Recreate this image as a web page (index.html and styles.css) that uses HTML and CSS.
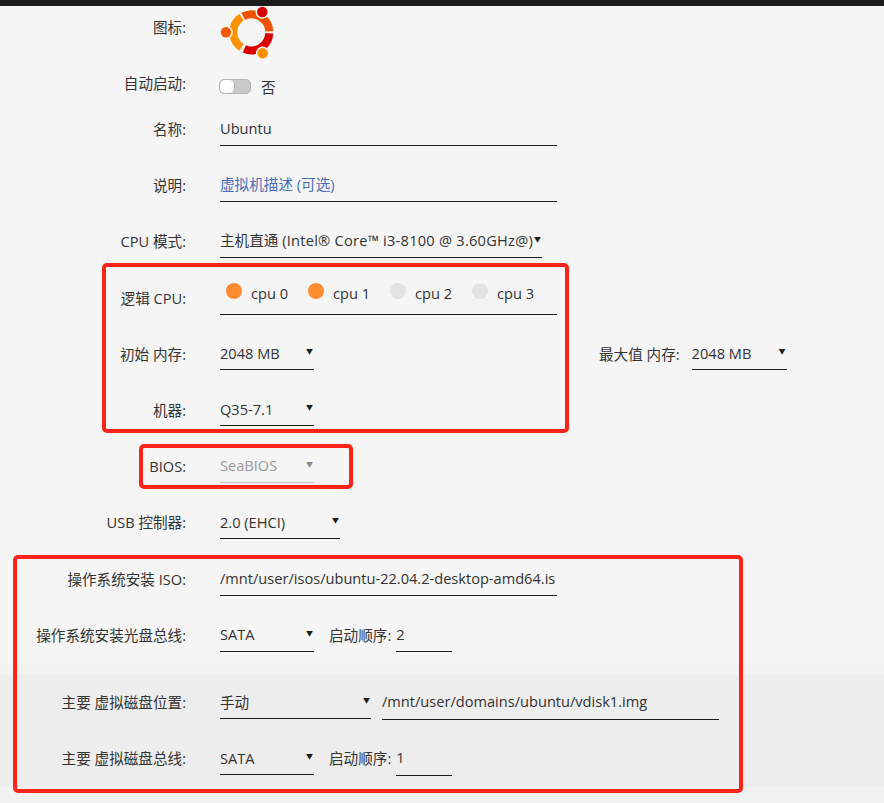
FILE: index.html
```html
<!DOCTYPE html>
<html lang="zh">
<head>
<meta charset="utf-8">
<title>VM</title>
<link rel="stylesheet" href="styles.css">
</head>
<body>
<div class="topbar"></div>
<main class="form">
  <div class="row row-icon">
    <div class="label">图标:</div>
    <svg class="logo" viewBox="0 0 54 54" width="54" height="54">
      <g fill="none" stroke-width="8">
        <path d="M23.1 10.3 A18 18 0 0 1 49.3 25.4" stroke="#f15200"/>
        <path d="M49.3 27.2 A18 18 0 0 1 24.3 42.9" stroke="#dc0000"/>
        <path d="M21.5 41.4 A18 18 0 0 1 21.5 11.2" stroke="#ff9000"/>
      </g>
      <g stroke="#f5f5f5" stroke-width="1.5">
        <circle cx="42.3" cy="6" r="6" fill="#d40000"/>
        <circle cx="6" cy="26.3" r="6" fill="#f15a00"/>
        <circle cx="42.7" cy="47.3" r="6" fill="#ff9000"/>
      </g>
    </svg>
  </div>
  <div class="row row-auto">
    <div class="label">自动启动:</div>
    <div class="switch"><span class="knob"></span></div>
    <span class="switch-text">否</span>
  </div>
  <div class="row row-name">
    <div class="label">名称:</div>
    <div class="field w337">Ubuntu</div>
  </div>
  <div class="row">
    <div class="label">说明:</div>
    <div class="field w337 hint">虚拟机描述 (可选)</div>
  </div>
  <div class="row">
    <div class="label">CPU 模式:</div>
    <div class="field select w322">主机直通 <span class="wide">(Intel® Core™ i3-8100 @ 3.60GHz@)</span><span class="caret">▼</span></div>
  </div>
  <div class="row row-long">
    <div class="label">逻辑 CPU:</div>
    <div class="field cpus">
      <span class="cpu"><i class="dot on"></i>cpu 0</span>
      <span class="cpu"><i class="dot on"></i>cpu 1</span>
      <span class="cpu"><i class="dot"></i>cpu 2</span>
      <span class="cpu"><i class="dot"></i>cpu 3</span>
    </div>
  </div>
  <div class="row row-short nudge">
    <div class="label">初始 内存:</div>
    <div class="field select w94">2048 MB<span class="caret">▼</span></div>
    <div class="label max-label">最大值 内存:</div>
    <div class="field select w95">2048 MB<span class="caret">▼</span></div>
  </div>
  <div class="row nudge">
    <div class="label">机器:</div>
    <div class="field select w94">Q35-7.1<span class="caret">▼</span></div>
  </div>
  <div class="row row-long">
    <div class="label">BIOS:</div>
    <div class="field select w94 disabled">SeaBIOS<span class="caret">▼</span></div>
  </div>
  <div class="row">
    <div class="label">USB 控制器:</div>
    <div class="field select w120 lower">2.0 (EHCI)<span class="caret">▼</span></div>
  </div>
  <div class="row row-long">
    <div class="label">操作系统安装 ISO:</div>
    <div class="field w337">/mnt/user/isos/ubuntu-22.04.2-desktop-amd64.is</div>
  </div>
  <div class="row">
    <div class="label">操作系统安装光盘总线:</div>
    <div class="field select w94">SATA<span class="caret">▼</span></div>
    <span class="boot">启动顺序:</span>
    <div class="field w56">2</div>
  </div>
  <section class="disk">
    <div class="disk-inner">
      <div class="row row-first">
        <div class="label">主要 虚拟磁盘位置:</div>
        <div class="field select w151 lower">手动<span class="caret">▼</span></div>
        <div class="field w337 path low">/mnt/user/domains/ubuntu/vdisk1.img</div>
      </div>
      <div class="row">
        <div class="label">主要 虚拟磁盘总线:</div>
        <div class="field select w94 lower">SATA<span class="caret">▼</span></div>
        <span class="boot">启动顺序:</span>
        <div class="field w56 low">1</div>
      </div>
    </div>
  </section>
</main>
<div class="mark mark-cpu"></div>
<div class="mark mark-bios"></div>
<div class="mark mark-disk"></div>
</body>
</html>
```
FILE: styles.css
```css
* { box-sizing: border-box; }
html, body { margin: 0; padding: 0; }
body {
  width: 884px;
  height: 803px;
  overflow: hidden;
  position: relative;
  background: #f5f5f5;
  color: #333;
  font-family: "Open Sans", "Noto Sans CJK SC", sans-serif;
  font-size: 14.6px;
}
.topbar { height: 6px; background: #1c1c1c; }
.form { display: flex; flex-direction: column; }
.row {
  display: flex;
  align-items: flex-end;
  height: 56px;
  flex: none;
}
.row-icon { height: 54px; align-items: flex-start; }
.row-icon .label { padding-top: 12px; padding-bottom: 0; }
.row-auto { height: 52px; align-items: center; }
.row-auto .label { padding-bottom: 0; margin-bottom: 6px; }
.row-name { height: 34px; }
.row-long { height: 57px; }
.row-short { height: 55px; }
.label {
  width: 186px;
  flex: none;
  text-align: right;
  line-height: 18px;
  padding-bottom: 8px;
}
.nudge .label { padding-bottom: 7px; }
.nudge .field { padding-top: 8px; }
.logo { margin-left: 34px; flex: none; }
.switch {
  margin-left: 33px;
  width: 32px;
  height: 15px;
  border-radius: 5px;
  border: 1px solid #b4b4b4;
  background: #c9c9c9;
  position: relative;
}
.knob {
  position: absolute;
  left: 0;
  top: 0;
  width: 15px;
  height: 13px;
  border-radius: 5px;
  background: #fff;
  border-right: 1px solid #b4b4b4;
}
.switch-text { margin-left: 10px; }
.field {
  position: relative;
  flex: none;
  margin-left: 34px;
  height: 34px;
  line-height: 18px;
  padding-top: 7px;
  border-bottom: 1px solid #1c1c1c;
  white-space: nowrap;
  overflow: hidden;
}
.lower { padding-top: 8px; }
.wide { letter-spacing: 0.25px; }
.w337 { width: 337px; }
.w322 { width: 322px; }
.w94 { width: 94px; }
.w95 { width: 95px; }
.w120 { width: 120px; }
.w151 { width: 151px; }
.w56 { width: 56px; margin-left: 5px; }
.hint { color: #486dba; }
.caret {
  position: absolute;
  right: 1px;
  top: 11px;
  width: 7px;
  font-size: 7px;
  line-height: 10px;
  color: #1c1c1c;
  text-align: center;
}
.disabled { color: #999; border-bottom-color: #c4c4c4; }
.disabled .caret { color: #8a8a8a; }
.row .max-label { width: auto; margin-left: 285px; }
.row .max-label + .field { margin-left: 12px; }
.cpus { display: flex; width: 337px; height: 46px; padding-top: 8px; }
.cpu { width: 82px; display: flex; align-items: flex-start; padding-top: 7px; }
.dot {
  width: 16px;
  height: 16px;
  border-radius: 50%;
  background: #e3e3e3;
  margin: -1px 9px 0 6px;
  flex: none;
}
.dot.on { background: #ff8c2f; }
.boot { margin-left: 15px; padding-bottom: 8px; line-height: 18px; }
.disk {
  background: #f2f2f2;
  margin-top: 12px;
  padding: 11px 0 16px;
}
.disk-inner { background: #ededed; height: 112px; }
.row-first { height: 44px; }
.path { margin-left: 11px; }
.low { height: 35px; margin-bottom: -1px; }
.mark {
  position: absolute;
  border: 4px solid #ff2318;
  border-radius: 5px;
  pointer-events: none;
}
.mark-cpu { left: 102px; top: 263px; width: 467px; height: 170px; }
.mark-bios { left: 139px; top: 444px; width: 214px; height: 45px; }
.mark-disk { left: 13px; top: 555px; width: 730px; height: 238px; }
```
